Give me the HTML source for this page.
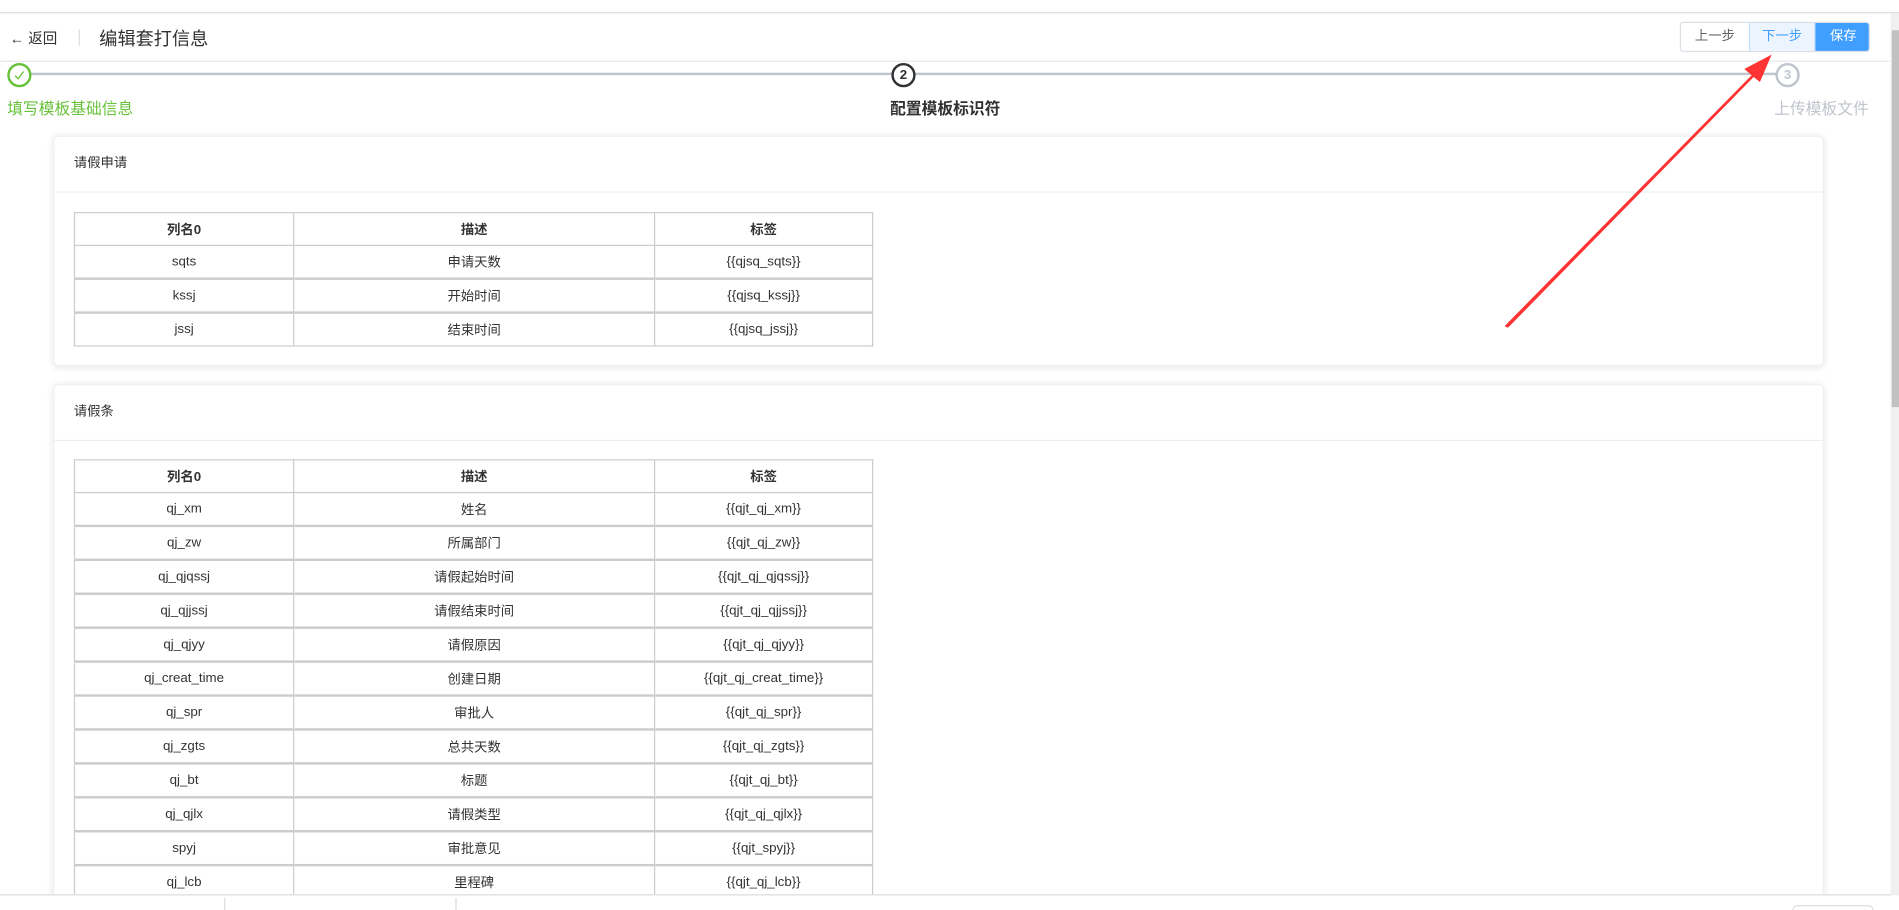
<!DOCTYPE html>
<html><head><meta charset="utf-8"><style>
html,body{margin:0;padding:0;width:1899px;height:910px;overflow:hidden;background:#fff}
#w{position:absolute;left:0;top:0;width:1568px;height:751px;overflow:hidden;transform:scale(1.21110,1.21172);transform-origin:0 0;font-family:"Liberation Sans","Noto Sans CJK SC",sans-serif;color:#303133}
.a{position:absolute}
.card{position:absolute;left:44px;width:1462px;background:#fff;border-radius:4px;box-shadow:0 1px 6px rgba(0,0,0,.10);border:1px solid #eef0f3;box-sizing:border-box}
.ch{height:45px;border-bottom:1px solid #ebeef5;font-size:11px;line-height:45px;padding-left:16px;color:#303133}
table{position:absolute;left:16px;border-collapse:collapse;font-size:11px;color:#333}
td,th{border:1px solid #ccc;text-align:center;height:26px;padding:0}
th{font-weight:bold}
tr.r td{border-top:2px solid #ccc}
</style></head><body><div id="w">
<div class="a" style="left:0;top:10px;width:1568px;border-top:1px solid #dcdcdc"></div>
<div class="a" style="left:8px;top:23px;font-size:12px">← 返回</div>
<div class="a" style="left:65px;top:24px;width:1px;height:14px;background:#dcdfe6"></div>
<div class="a" style="left:82px;top:21px;font-size:15px;color:#303133">编辑套打信息</div>
<div class="a" style="left:1387px;top:18px;width:157px;height:25px;border:1px solid #dcdfe6;border-radius:3px;box-sizing:border-box;overflow:hidden;font-size:11px;line-height:23px">
<div class="a" style="left:0;top:0;width:56px;height:23px;text-align:center;color:#606266">上一步</div>
<div class="a" style="left:56px;top:0;width:55px;height:23px;text-align:center;color:#409eff;background:#ecf5ff;border-left:1px solid #c6e2ff;border-right:1px solid #c6e2ff;box-sizing:border-box">下一步</div>
<div class="a" style="left:111px;top:-1px;width:46px;height:25px;text-align:center;color:#fff;background:#409eff;line-height:25px">保存</div>
</div>
<div class="a" style="left:0;top:50px;width:1560px;border-top:1px solid #e4e7ed"></div>
<div class="a" style="left:15px;top:60px;width:1460px;height:2px;background:#c0c4cc"></div>
<div class="a" style="left:6px;top:52px;width:16px;height:16px;border:2px solid #67c23a;border-radius:50%;background:#fff"><svg width="16" height="16" style="position:absolute;left:0;top:0"><path d="M4.5 8.5 L7 11 L11.5 5" fill="none" stroke="#67c23a" stroke-width="1.1"/></svg></div>
<div class="a" style="left:736px;top:52px;width:16px;height:16px;border:2px solid #303133;border-radius:50%;background:#fff;font-size:11px;font-weight:bold;line-height:16px;text-align:center">2</div>
<div class="a" style="left:1466px;top:52px;width:16px;height:16px;border:2px solid #c0c4cc;border-radius:50%;background:#fff;color:#c0c4cc;font-size:11px;font-weight:bold;line-height:16px;text-align:center">3</div>
<div class="a" style="left:6px;top:79px;font-size:13px;color:#67c23a">填写模板基础信息</div>
<div class="a" style="left:735px;top:79px;font-size:13px;font-weight:bold;color:#303133">配置模板标识符</div>
<div class="a" style="left:1465px;top:79px;font-size:13px;color:#c0c4cc">上传模板文件</div>

<div class="card" style="top:112px;height:190px"><div class="ch">请假申请</div>
<table style="top:62px;width:660px"><colgroup><col style="width:181px"><col style="width:298px"><col></colgroup>
<tr><th>列名0</th><th>描述</th><th>标签</th></tr>
<tr><td>sqts</td><td>申请天数</td><td>{{qjsq_sqts}}</td></tr>
<tr class="r"><td>kssj</td><td>开始时间</td><td>{{qjsq_kssj}}</td></tr>
<tr class="r"><td>jssj</td><td>结束时间</td><td>{{qjsq_jssj}}</td></tr>
</table></div>

<div class="card" style="top:317px;height:460px"><div class="ch">请假条</div>
<table style="top:61px;width:660px"><colgroup><col style="width:181px"><col style="width:298px"><col></colgroup>
<tr><th>列名0</th><th>描述</th><th>标签</th></tr>
<tr><td>qj_xm</td><td>姓名</td><td>{{qjt_qj_xm}}</td></tr>
<tr class="r"><td>qj_zw</td><td>所属部门</td><td>{{qjt_qj_zw}}</td></tr>
<tr class="r"><td>qj_qjqssj</td><td>请假起始时间</td><td>{{qjt_qj_qjqssj}}</td></tr>
<tr class="r"><td>qj_qjjssj</td><td>请假结束时间</td><td>{{qjt_qj_qjjssj}}</td></tr>
<tr class="r"><td>qj_qjyy</td><td>请假原因</td><td>{{qjt_qj_qjyy}}</td></tr>
<tr class="r"><td>qj_creat_time</td><td>创建日期</td><td>{{qjt_qj_creat_time}}</td></tr>
<tr class="r"><td>qj_spr</td><td>审批人</td><td>{{qjt_qj_spr}}</td></tr>
<tr class="r"><td>qj_zgts</td><td>总共天数</td><td>{{qjt_qj_zgts}}</td></tr>
<tr class="r"><td>qj_bt</td><td>标题</td><td>{{qjt_qj_bt}}</td></tr>
<tr class="r"><td>qj_qjlx</td><td>请假类型</td><td>{{qjt_qj_qjlx}}</td></tr>
<tr class="r"><td>spyj</td><td>审批意见</td><td>{{qjt_spyj}}</td></tr>
<tr class="r"><td>qj_lcb</td><td>里程碑</td><td>{{qjt_qj_lcb}}</td></tr>
</table></div>

<div class="a" style="left:0;top:738px;width:1568px;height:30px;background:#fff;border-top:1px solid #dcdcdc;z-index:5"></div>
<div class="a" style="left:185px;top:741px;width:1px;height:10px;background:#dcdcdc;z-index:6"></div>
<div class="a" style="left:376px;top:741px;width:1px;height:10px;background:#dcdcdc;z-index:6"></div>
<div class="a" style="left:1480px;top:747px;width:65px;height:10px;border:1px solid #dcdcdc;border-radius:4px;z-index:6"></div>

<div class="a" style="left:1561px;top:11px;width:7px;height:728px;background:#f0f0f0;z-index:6"></div>
<div class="a" style="left:1562px;top:25px;width:6px;height:311px;background:#c1c1c1;z-index:6"></div>

<svg class="a" style="left:0;top:0;z-index:7" width="1568" height="751"><polygon points="1243,269 1447,62 1441,57 1462,46 1453,67 1448,63 1245,270" fill="#f33" stroke="#f33" stroke-width="0.8"/></svg>
</div></body></html>
